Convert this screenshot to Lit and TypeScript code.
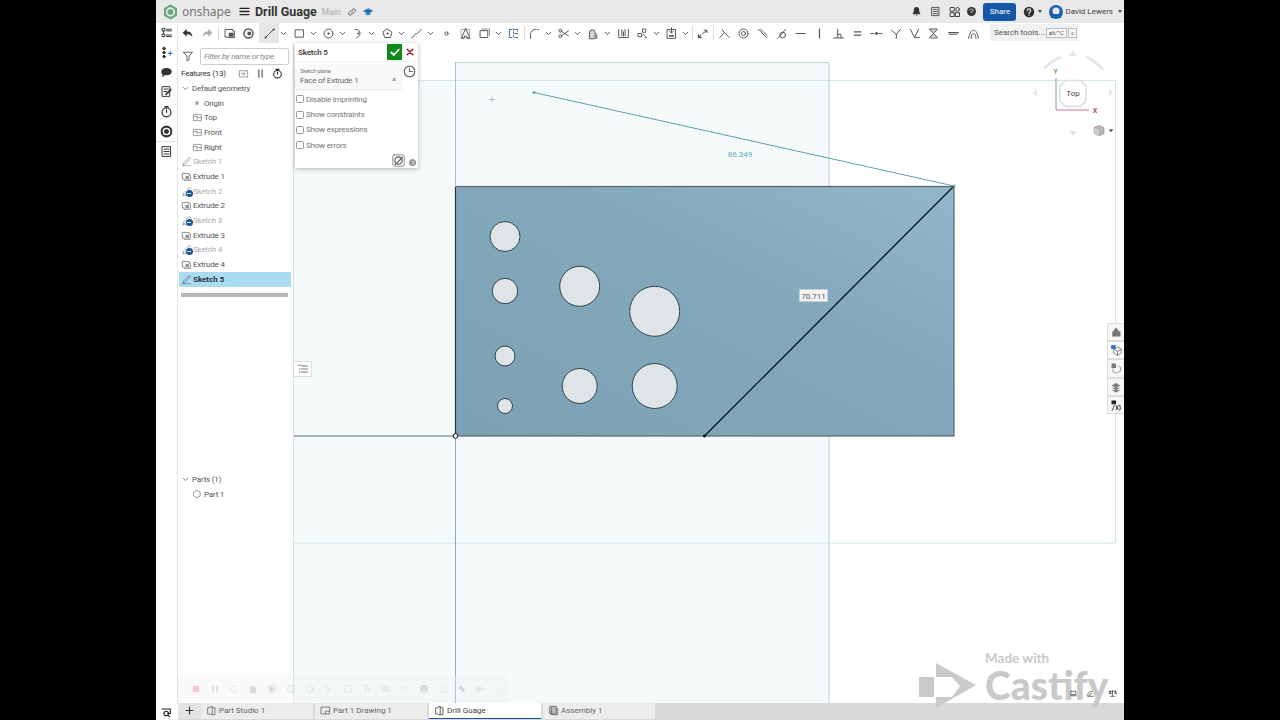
import { LitElement, html, svg, css } from 'lit';
import { customElement } from 'lit/decorators.js';

const S = (body: unknown, size = 14, box = '0 0 16 16') =>
  html`<svg width=${size} height=${size} viewBox=${box} fill="none" stroke="currentColor" stroke-width="1.2" stroke-linecap="round" stroke-linejoin="round">${body}</svg>`;

// sketch toolbar glyphs, all in a 16x16 box
const G: Record<string, unknown> = {
  undo: svg`<path d="M2 7l5-4.500v3c4.500 0 7 2.500 7 7-2-3-3.500-3.500-7-3.500v3z" fill="#333" stroke="none"/>`,
  redo: svg`<path d="M14 7L9 2.500v3c-4.500 0-7 2.500-7 7 2-3 3.500-3.500 7-3.500v3z" fill="#aaa" stroke="none"/>`,
  studio: svg`<path d="M3 3h9v2h2v8H5v-1H3z"/><rect x="7" y="7" width="6" height="5" fill="currentColor" stroke="none"/>`,
  rings: svg`<circle cx="8" cy="8" r="5.500" stroke-width="1.800"/><circle cx="9" cy="8" r="2.500" fill="currentColor" stroke="none"/>`,
  line: svg`<path d="M3 13L13 3"/><circle cx="3" cy="13" r=".8"/><circle cx="13" cy="3" r=".8"/>`,
  rect: svg`<rect x="3" y="3.500" width="10" height="9"/>`,
  circle: svg`<circle cx="8" cy="8" r="5.500"/><circle cx="8" cy="8" r=".8" fill="currentColor"/>`,
  arc: svg`<path d="M5 3a5 5 0 0 1 2 10" stroke-dasharray="2 1"/><circle cx="9" cy="8" r=".8" fill="currentColor"/>`,
  poly: svg`<path d="M8 2.500l5.500 4-2 6.500h-7l-2-6.500z"/><circle cx="8" cy="8" r=".8" fill="currentColor"/>`,
  spline: svg`<path d="M2 13c3 0 3-5 6-5s3-4 6-5" stroke-dasharray="3 1"/>`,
  point: svg`<circle cx="8" cy="8" r="2"/>`,
  text: svg`<path d="M8 2l-5 12h3l1-3h2l1 3h3z"/><path d="M3 3h10v10H3z" stroke-width=".6"/>`,
  conrect: svg`<rect x="3" y="4.500" width="9" height="8.500"/><path d="M5 2.500h9v8" stroke-width=".8"/>`,
  mirror: svg`<path d="M8 2v12" stroke-dasharray="2 2" stroke="#2d6fb5"/><path d="M6 3H3v10h3" stroke="#2d6fb5"/><path d="M10 3h3v2M10 8h3M10 13h3"/>`,
  fillet: svg`<path d="M3 14V9c0-3 3-6 6-6h1"/><path d="M12 3h2" stroke-dasharray="1 1"/>`,
  scissors: svg`<circle cx="4" cy="4.500" r="1.800"/><circle cx="4" cy="11.500" r="1.800"/><path d="M5.500 5.500L14 11M5.500 10.500L14 5"/>`,
  offset: svg`<path d="M3 14V7a3.500 3.500 0 0 1 7 0v7z" fill="currentColor" fill-opacity=".25"/><path d="M12 14V9" />`,
  ruler: svg`<path d="M2 3v10h12V3M6 3v8M10 3v8M8 6v5"/>`,
  pattern: svg`<rect x="8" y="2.500" width="4" height="4" stroke-dasharray="1 1"/><rect x="3" y="8" width="4" height="4"/><path d="M9 9l4 4-2 0" stroke-dasharray="1 1"/>`,
  clip: svg`<rect x="3" y="3" width="10" height="11"/><path d="M8 1v6M5.500 5L8 7.500 10.500 5" /><rect x="5" y="10" width="6" height="2" fill="currentColor" stroke="none"/>`,
  arrow: svg`<path d="M3 13l3-3M3 9.500V13h3.500" stroke-width="1.500"/><path d="M8 8l5-3M10 4h3.500v3" stroke-width="1.200"/>`,
  coin: svg`<path d="M2 13L8 7l6 6M8 7L5 3"/>`,
  conc: svg`<circle cx="8" cy="8" r="5.500"/><circle cx="8" cy="8" r="2.500"/>`,
  para: svg`<path d="M3 3l10 10M5.500 2.500l8 8"/>`,
  tang: svg`<circle cx="9.500" cy="10" r="3.500"/><path d="M3 14L13 3"/>`,
  horiz: svg`<path d="M2.500 8h11" stroke-width="1.500"/>`,
  vert: svg`<path d="M8 2.500v11" stroke-width="1.500"/>`,
  perp: svg`<path d="M2 13.500h12M7 3v10M7 9h4v4"/>`,
  eq: svg`<path d="M4 6h8M4 10h8" stroke-width="1.500"/>`,
  mid: svg`<path d="M1 8h4M11 8h4" stroke-dasharray="1.500 1"/><circle cx="8" cy="8" r="1.400" fill="currentColor"/>`,
  normal: svg`<path d="M3 4l6 5 5-6M9 9v5"/>`,
  pierce: svg`<path d="M3 3l5 10 5-10M8 13h6"/>`,
  sym: svg`<path d="M3 2.500h10L8 8l5 5.500H3L8 8z"/><path d="M5 5h6M5 11h6" stroke-width=".6"/>`,
  dim: svg`<path d="M2 7h12" stroke-width="1.500"/><path d="M3 9h10" stroke-dasharray="1 1"/>`,
  curve: svg`<path d="M2 14c1-6 3-10 6-10s5 4 6 10"/><path d="M5 14c0-3 1-6 3-6s3 3 3 6"/>`,
};

// [centre x on the page, glyph]
const TOOLS: [number, string][] = [
  [187, 'undo'], [207, 'redo'], [229, 'studio'], [248, 'rings'], [269, 'line'], [283, 'v'], [299, 'rect'], [313, 'v'],
  [328, 'circle'], [342, 'v'], [357, 'arc'], [371, 'v'], [387, 'poly'], [401, 'v'], [416, 'spline'], [430, 'v'],
  [446, 'point'], [465, 'text'], [484, 'conrect'], [498, 'v'], [513, 'mirror'], [534, 'fillet'], [548, 'v'],
  [563, 'scissors'], [577, 'v'], [593, 'offset'], [607, 'v'], [623, 'ruler'], [642, 'pattern'], [656, 'v'],
  [671, 'clip'], [685, 'v'], [702, 'arrow'], [724, 'coin'], [743, 'conc'], [762, 'para'], [781, 'tang'], [800, 'horiz'],
  [819, 'vert'], [838, 'perp'], [857, 'eq'], [876, 'mid'], [895, 'normal'], [914, 'pierce'], [933, 'sym'], [953, 'dim'], [973, 'curve'],
];
const SEPS = [218, 524, 692, 713];

const chev = svg`<path d="M4 6l4 4 4-4" stroke-width="1.600"/>`;
const pageIcon = svg`<path d="M2.500 3.500h9v2h2v8h-9v-2h-2z"/><rect x="6.500" y="7" width="5" height="5" fill="currentColor" stroke="none" opacity=".8"/>`;
const planeIcon = svg`<path d="M2.500 3.500h11v9h-11z" stroke-width="1"/><path d="M2.500 6.500h5v4" stroke-width="1"/><path d="M8 8h5.500" stroke-width="1"/>`;
const pencil = svg`<path d="M2 14h12" stroke-width=".7"/><path d="M3 13l1-3 8-8 2 2-8 8z" stroke-width=".9"/>`;

const FEATURES = [
  { n: 'Sketch 1', t: 'sk', off: true }, { n: 'Extrude 1', t: 'ex' }, { n: 'Sketch 2', t: 'sk', off: true, hid: true },
  { n: 'Extrude 2', t: 'ex' }, { n: 'Sketch 3', t: 'sk', off: true, hid: true }, { n: 'Extrude 3', t: 'ex' },
  { n: 'Sketch 4', t: 'sk', off: true, hid: true }, { n: 'Extrude 4', t: 'ex' },
];
const HOLES = [
  [505, 236.5, 15], [505, 291, 12.7], [579.7, 286.3, 20], [654.7, 311.3, 25],
  [505, 356, 10], [579.7, 386, 17.5], [654.7, 386, 22.5], [505, 406, 7.5],
];
const TABS = [
  { n: 'Part Studio 1', i: 'ps' }, { n: 'Part 1 Drawing 1', i: 'dr' },
  { n: 'Drill Guage', i: 'ps', on: true }, { n: 'Assembly 1', i: 'as' },
];
// faint capture bar left over the recording, [colour, glyph]
const REC: [string, unknown][] = [
  ['#eee', svg`<path d="M4 3h8v10H4z"/>`],
  ['#f3c9cf', svg`<rect x="3" y="3" width="10" height="10" fill="currentColor" stroke="none"/>`],
  ['#ddd', svg`<path d="M5 3v10M11 3v10" stroke-width="2.400"/>`],
  ['#ddd', svg`<path d="M13 8a5 5 0 1 1-2-4"/>`],
  ['#d8d8d8', svg`<path d="M4 5h8v9H4zM3 3.500h10" fill="currentColor"/>`],
  ['#d4d4d4', svg`<circle cx="8" cy="8" r="8" fill="#eee" stroke="none"/><path d="M5 4l6 5-3 .5-1 3z" fill="currentColor"/>`],
  ['#d6dcdc', svg`<circle cx="8" cy="8" r="5.500" stroke-width="1.500"/><path d="M8 8l5 5"/>`],
  ['#dbe3e3', svg`<circle cx="8" cy="8" r="5.500" stroke-width="1.500"/><path d="M9 9l4 4"/>`],
  ['#e0e8e8', svg`<path d="M5 5l6 5-3 .5-1 3zM3 2v2M2 3h2"/>`],
  ['#e0e8e8', svg`<path d="M3 3h10v10H3z" stroke-dasharray="2 1"/>`],
  ['#dbe3e3', svg`<path d="M2 3h7M5.500 3v10M9 7h5M11.500 7v6"/>`],
  ['#e0e8e8', svg`<path d="M3 3v10M6.500 3v10M10 3v10M13 3v10M2 6h12M2 10h12" stroke-dasharray="1 1"/>`],
  ['#dbe3e3', svg`<path d="M3 13L13 3M3 6l3-3M10 13l3-3" stroke-width="1.600"/>`],
  ['#d0d8d8', svg`<circle cx="8" cy="8" r="6.500" fill="currentColor" stroke="none"/><path d="M5 10.500c2 1.500 4 1.500 6 0M5.500 6h1M9.500 6h1" stroke="#fff"/>`],
  ['#dbe3e3', svg`<path d="M2 10l6-6 6 6-3 3H5z"/>`],
  ['#d0d8d8', svg`<path d="M4 4l8 8M6 3l6 6-2 4-6-6z" fill="currentColor"/>`],
  ['#e0e8e8', svg`<rect x="2" y="4" width="8" height="8" fill="currentColor" stroke="none"/><path d="M10 7l4-2v6l-4-2z" fill="currentColor" stroke="none"/>`],
  ['#e0e8e8', svg`<path d="M10 3L5 8l5 5"/>`],
];

@customElement('app-root')
export class AppRoot extends LitElement {
  static styles = css`
    :host { display: block; width: 1280px; height: 720px; background: #000; font-family: Roboto, "Noto Sans", sans-serif; overflow: hidden; }
    .app { width: 968px; height: 720px; margin-left: 156px; background: #fff; display: flex; flex-direction: column; position: relative; overflow: hidden; }

    .top { height: 23px; background: #e9e9e9; display: flex; align-items: center; flex: none; color: #333; }
    .logo { margin-left: 7px; display: flex; }
    .brand { font-size: 12px; font-family: "Noto Sans", sans-serif; color: #777; margin-left: 4px; width: 53px; }
    .burger { margin-left: 4px; display: flex; color: #222; }
    .doc { font-size: 12.500px; font-weight: 700; color: #333; margin-left: 5px; }
    .branch { font-size: 8.500px; color: #aaa; margin-left: 5px; }
    .top-r { margin-left: auto; display: flex; align-items: center; }
    .share { width: 33px; height: 18px; background: #1657a8; border-radius: 3px; color: #fff; font-size: 8px; display: flex; align-items: center; justify-content: center; margin: 0 4px 0 4px; }
    .user { font-size: 8px; color: #444; margin-left: 2px; white-space: nowrap; }
    .caret { width: 0; height: 0; border: 2.500px solid transparent; border-top: 3px solid #444; border-bottom: none; }

    .tools { height: 20px; flex: none; background: #fff; position: relative; display: flex; align-items: center; color: #555; }
    .tool { width: 14px; height: 14px; display: flex; align-items: center; justify-content: center; flex: none; color: #555; }
    .tool.v { color: #444; }
    .tool.on { background: #e6e6e6; box-shadow: 0 0 0 3px #e6e6e6; }
    .sep { position: absolute; top: 3px; width: 1px; height: 15px; background: #ddd; }
    .search { position: absolute; left: 834px; top: 1px; width: 88px; height: 17px; background: #f1f1f1; font-size: 8px; color: #555; display: flex; align-items: center; padding-left: 4px; box-sizing: border-box; gap: 1px; white-space: nowrap; }
    .key { border: 1px solid #bbb; font-size: 5.500px; background: #f8f8f8; padding: 0 2px; line-height: 8px; color: #444; }

    .main { flex: 1; display: flex; min-height: 0; position: relative; }
    .rail { width: 22px; flex: none; border-right: 1px solid #e5e5e5; box-sizing: border-box; display: flex; flex-direction: column; align-items: center; color: #333; margin-top: -20px; background: #fff; z-index: 1; }
    .rail i { display: flex; height: 19.700px; align-items: center; }
    .rail hr { width: 22px; border: 0; border-top: 1px solid #ddd; margin: 0; height: 0; }
    .panel { width: 116px; flex: none; border-right: 1px solid #ddd; box-sizing: border-box; display: flex; flex-direction: column; font-size: 8px; letter-spacing: -.2px; color: #444; }
    .filter { display: flex; align-items: center; height: 22px; box-sizing: border-box; padding: 4px 0 0 4px; gap: 6px; color: #555; }
    .filter div { width: 89px; height: 17px; border: 1px solid #ccc; border-radius: 2px; box-sizing: border-box; font-style: italic; color: #888; display: flex; align-items: center; padding-left: 3px; font-size: 8px; }
    .head { display: flex; align-items: center; height: 16px; padding: 0 7px 0 3px; color: #333; }
    .head b { font-weight: 400; flex: 1; }
    .head span { display: flex; width: 17px; justify-content: center; color: #888; }
    .row { height: 14.700px; display: flex; align-items: center; white-space: nowrap; color: #555; }
    .row .ic { width: 14px; display: flex; justify-content: center; position: relative; color: #777; flex: none; }
    .row.off { color: #aaa; }
    .row.sel { background: #a9dcf2; color: #223; font-weight: 600; margin: 0 2px 0 1px; letter-spacing: 0; }
    .row.sel .ic { color: #556; }
    .hid { position: absolute; left: 6.500px; top: 4px; width: 7px; height: 7px; border-radius: 50%; background: #14559e; }
    .hid::after { content: ""; position: absolute; left: 1.500px; top: 3px; width: 4px; height: 1px; background: #fff; }
    .rollback { height: 4px; background: #b8b8b8; margin: 6px 5px 0 3px; }
    .parts { margin-top: auto; height: 231px; flex: none; }
    .dot { width: 4px; height: 4px; border-radius: 50%; background: #aaa; }

    .canvas { flex: 1; position: relative; min-width: 0; }
    .canvas > svg { display: block; }
    .dlg { position: absolute; left: 1px; top: 0; width: 123px; height: 125px; background: #fff; box-shadow: 0 1px 5px rgba(0,0,0,.28); font-size: 8px; letter-spacing: -.2px; color: #777; box-sizing: border-box; display: flex; flex-direction: column; }
    .dlg-h { display: flex; align-items: center; height: 18px; padding-left: 3px; border-bottom: 1px solid #eee; flex: none; color: #444; font-weight: 600; }
    .ok { margin-left: auto; width: 15px; height: 16px; background: #0d8a17; color: #fff; display: flex; align-items: center; justify-content: center; }
    .no { width: 16px; display: flex; justify-content: center; color: #9c2222; }
    .plane-w { display: flex; margin: 3px 0 0 1px; }
    .plane { width: 105px; height: 24px; background: #f8fafa; box-shadow: 0 1px 2px rgba(0,0,0,.12); box-sizing: border-box; padding: 2px 4px; position: relative; }
    .plane small { display: block; font-size: 5.800px; line-height: 8px; color: #777; }
    .plane span { display: block; line-height: 12px; color: #666; font-size: 8px; }
    .plane em { position: absolute; right: 5px; top: 10px; font-style: normal; font-size: 8px; }
    .clock { margin-left: 2px; color: #666; display: flex; }
    .chk { display: flex; align-items: center; gap: 2px; height: 15.400px; padding-left: 1px; }
    .chk i { width: 6px; height: 6px; border: 1px solid #999; border-radius: 1.500px; flex: none; }
    .chks { margin-top: 2.500px; }
    .dlg-f { margin-top: auto; display: flex; justify-content: flex-end; align-items: center; height: 18px; padding-right: 2px; gap: 4px; color: #555; }
    .help { width: 7px; height: 7px; border-radius: 50%; background: #999; color: #fff; font-size: 6px; line-height: 7px; text-align: center; margin-top: 3px; }
    .list-btn { position: absolute; left: 0; top: 318px; width: 18px; height: 16px; background: #fff; border: 1px solid #ddd; border-left: 0; box-sizing: border-box; color: #666; display: flex; align-items: center; justify-content: center; }
    .views { position: absolute; right: 0; top: 280px; width: 17px; display: flex; flex-direction: column; }
    .views span { height: 18.200px; background: #f6f6f6; border: 1px solid #ddd; border-right: 0; box-sizing: border-box; display: flex; align-items: center; justify-content: center; color: #777; }
    .views span.hi { color: #456; background: #fafafa; }
    .mark { position: absolute; left: 625px; top: 608px; color: #c9c9c9; font-family: Lato, "Noto Sans", sans-serif; font-weight: 700; display: flex; }
    .mark-t { display: flex; flex-direction: column; align-items: flex-start; margin-left: 8px; }
    .mark-t small { font-size: 13.500px; line-height: 14px; }
    .mark-t b { font-size: 39px; line-height: 40px; font-weight: 900; }
    .rec { position: absolute; left: 16px; top: 632px; width: 336px; height: 27px; background: rgba(240,240,240,.35); display: flex; align-items: center; box-sizing: border-box; }
    .rec span { width: 18.950px; display: flex; justify-content: center; flex: none; }
    .rec span:first-child { margin-left: -4px; }
    .marks { position: absolute; left: 775px; top: 646px; display: flex; color: #333; gap: 8px; }

    .tabs { height: 17px; flex: none; background: #d9d9d9; display: flex; align-items: flex-start; font-size: 8px; color: #555; }
    .t-ic { width: 22px; height: 17px; background: #fff; display: flex; align-items: center; justify-content: center; color: #222; flex: none; }
    .t-add { width: 23px; height: 15.500px; background: #e3e3e3; display: flex; align-items: center; justify-content: center; color: #333; flex: none; }
    .tab { width: 112px; height: 15.500px; margin-right: 2px; background: #ececec; display: flex; align-items: center; padding-left: 5px; gap: 2px; box-sizing: border-box; flex: none; color: #666; }
    .tab.on { background: #fff; border-bottom: 1.500px solid #1657a8; color: #444; }
  `;

  private toolbar() {
    return TOOLS.map(([x, g], i) => {
      const left = i ? x - TOOLS[i - 1][0] - 14 : x - 156 - 7;
      return html`<span class="tool ${g === 'v' ? 'v' : ''} ${g === 'line' ? 'on' : ''}" style="margin-left:${left}px">
        ${g === 'v' ? S(chev, 9) : S(G[g], 13)}
      </span>`;
    });
  }

  private tree() {
    const row = (pad: number, icon: unknown, n: string, cls = '', hid = false) => html`
      <div class="row ${cls}" style="padding-left:${pad}px">
        <span class="ic">${icon}${hid ? html`<i class="hid"></i>` : ''}</span>${n}
      </div>`;
    return html`
      ${row(0, S(chev, 9), 'Default geometry')}
      ${row(12, html`<i class="dot"></i>`, 'Origin')}
      ${row(12, S(planeIcon, 11), 'Top')}
      ${row(12, S(planeIcon, 11), 'Front')}
      ${row(12, S(planeIcon, 11), 'Right')}
      ${FEATURES.map((f) => row(1, S(f.t === 'sk' ? pencil : pageIcon, 11), f.n, f.off ? 'off' : '', !!f.hid))}
      ${row(0, S(pencil, 11), 'Sketch 5', 'sel')}
      <div class="rollback"></div>`;
  }

  private drawing() {
    return svg`
      <defs>
        <linearGradient id="face" x1="0" y1="1" x2="1" y2="0">
          <stop offset="0" stop-color="#7da0b4"/><stop offset=".6" stop-color="#83a8bc"/><stop offset="1" stop-color="#93b7ca"/>
        </linearGradient>
      </defs>
      <rect x="294" y="43" width="830" height="660" fill="#fff"/>
      <rect x="294" y="80" width="535" height="623" fill="#f5fafb"/>
      <rect x="456" y="62" width="373" height="18" fill="#f5fafb"/>
      <path d="M294 80.500H1115.500V543H294" stroke="#d2e5e8" fill="none"/>
      <path d="M456 62.500H829V703" stroke="#b9d2d8" fill="none"/>
      <path d="M534 92.500L954 186" stroke="#5f9fae" fill="none"/>
      <circle cx="534" cy="92.500" r="1.500" fill="#5f9fae"/>
      <path d="M489 99.500h6M492 96.500v6" stroke="#aac" stroke-width=".8"/>
      <text x="740" y="157" text-anchor="middle" font-size="8" fill="#62a7b8">86.349</text>
      <rect x="455.500" y="186.500" width="498.500" height="249.500" fill="url(#face)" stroke="#5a6468" stroke-width="1.200"/>
      ${HOLES.map(([x, y, r]) => svg`<circle cx=${x} cy=${y} r=${r} fill="#dfe4e7" stroke="#2f4550" stroke-width="1"/>`)}
      <path d="M455.500 62V187" stroke="#a9c0d0" fill="none"/>
      <path d="M455.500 436V703" stroke="#8aa9c6" fill="none"/>
      <path d="M294 436H455.500" stroke="#8a9ba6" stroke-width="1.400" fill="none"/>
      <path d="M455.500 187V436" stroke="#23323a" fill="none"/>
      <path d="M704.500 436L954 186" stroke="#0c1a20" stroke-width="1.400" fill="none"/>
      <circle cx="704.500" cy="436" r="1.500" fill="#111"/>
      <circle cx="455.500" cy="436" r="2.300" fill="#fff" stroke="#111"/>
      <circle cx="954" cy="186" r="1.500" fill="#5f9fae"/>
      <rect x="799.500" y="289.500" width="28" height="12" fill="#f4f6f7" stroke="#c7ced2"/>
      <text x="813.500" y="298.500" text-anchor="middle" font-size="8" fill="#555">70.711</text>

      <g fill="none" stroke="#e6e6e6" stroke-width="2.500">
        <path d="M1044 69c3-4 8-8 17-12M1086 57c7 3 13 8 17 12"/>
      </g>
      <path d="M1073 51l4 5h-8zM1073 136l4-5h-8zM1033 93l4-4v8zM1113 93l-4-4v8z" fill="#e5e5e5"/>
      <path d="M1056 78V110" stroke="#6fae7a"/>
      <path d="M1056 110H1089" stroke="#c77b86"/>
      <path d="M1065.500 80.500h15l5.500 5.500v15l-5.500 5.500h-15l-5.500-5.500v-15z" fill="#fff" stroke="#dcdfe0" stroke-width="1.600"/>
      <text x="1073" y="96" text-anchor="middle" font-size="8" fill="#444">Top</text>
      <text x="1055.500" y="74" text-anchor="middle" font-size="6.500" font-weight="700" fill="#5fa86b">Y</text>
      <text x="1095" y="113" text-anchor="middle" font-size="6.500" font-weight="700" fill="#b5475a">X</text>
      <path d="M1094 127.500l5-2 5 2v6l-5 2.500-5-2.500z" fill="#b5b5b5" stroke="#888" stroke-width=".6"/>
      <path d="M1099 130v6l-5-2.500v-6z" fill="#ccc"/>
      <path d="M1108.500 129.500h5l-2.500 2.500z" fill="#444"/>`;
  }

  render() {
    const onshapeLogo = html`<svg width="15" height="16" viewBox="0 0 15 16">
      <path d="M7.500.5l6.500 3.700v7.600l-6.500 3.700L1 11.800V4.200z" fill="#6aa57c"/>
      <circle cx="7.500" cy="8" r="3.800" fill="none" stroke="#e9e9e9" stroke-width="1.700"/></svg>`;
    return html`
      <div class="app">
        <div class="top">
          <span class="logo">${onshapeLogo}</span>
          <span class="brand">onshape</span>
          <span class="burger">${S(svg`<path d="M1.500 3.500h13M1.500 8h13M1.500 12.500h13" stroke-width="2"/>`, 11)}</span>
          <span class="doc">Drill Guage</span>
          <span class="branch">Main</span>
          <span style="margin-left:6px;display:flex">${S(svg`<path d="M7 9.500a2.500 2.500 0 0 0 3.500 0L13 7a2.500 2.500 0 0 0-3.500-3.500L8.500 4.500M9 6.500a2.500 2.500 0 0 0-3.500 0L3 9a2.500 2.500 0 0 0 3.500 3.500l1-1"/>`, 10)}</span>
          <span style="margin-left:6px;display:flex;color:#1f67b5">${S(svg`<path d="M8 3L1 6.500 8 10l7-3.500z" fill="currentColor"/><path d="M4 9v3c2 1.500 6 1.500 8 0V9" fill="#3e8dc4" stroke="none"/>`, 10)}</span>
          <div class="top-r">
            <span style="display:flex;margin-right:8px">${S(svg`<path d="M8 1.500c-3 0-4 2.500-4 5 0 3-1.500 4.500-2 5.500h12c-.5-1-2-2.500-2-5.500 0-2.500-1-5-4-5zM6.500 13.500h3L8 15z" fill="currentColor" stroke="none"/>`, 11)}</span>
            <span style="display:flex;margin-right:8px">${S(svg`<rect x="3" y="2" width="10" height="12"/><path d="M5 5h6M5 8h6M5 11h6" stroke-dasharray="1.500 1"/>`, 11)}</span>
            <span style="display:flex;margin-right:5px">${S(svg`<rect x="2" y="2" width="5" height="5"/><rect x="2" y="9" width="5" height="5"/><rect x="9" y="9" width="5" height="5"/><circle cx="11.500" cy="4.500" r="2.500"/>`, 12)}</span>
            <span style="display:flex;margin-right:2px">${S(svg`<circle cx="8" cy="8" r="6.500" fill="currentColor" stroke="none"/><path d="M5 6c2-2 4-2 6 0-1 2-2 1-2 3H7" stroke="#e9e9e9"/>`, 11)}</span>
            <span class="share">Share</span>
            <span style="display:flex;margin:0 3px 0 3px">${S(svg`<circle cx="8" cy="8" r="7" fill="currentColor" stroke="none"/><path d="M5.800 6a2.200 2.200 0 1 1 3 2.200C8 8.700 8 9 8 10M8 12v.3" stroke="#e9e9e9" stroke-width="1.600"/>`, 12)}</span>
            <i class="caret"></i>
            <span style="display:flex;margin-left:7px">
              <svg width="14" height="14" viewBox="0 0 14 14"><circle cx="7" cy="7" r="7" fill="#1f5fae"/><circle cx="7" cy="6" r="3.500" fill="#e9e9e9"/><path d="M1.500 13c1-3 3-4 5.500-4s4.500 1 5.500 4z" fill="#1f5fae"/></svg>
            </span>
            <span class="user">David Lewers</span>
            <i class="caret" style="margin:0 2px 0 5px"></i>
          </div>
        </div>

        <div class="tools">
          ${this.toolbar()}
          ${SEPS.map((x) => html`<i class="sep" style="left:${x - 156}px"></i>`)}
          <div class="search">Search tools... <span class="key">alt/⌥</span><span class="key">c</span></div>
        </div>

        <div class="main">
          <div class="rail">
            <i>${S(svg`<path d="M3 3h3v3H3zM3 10h3v3H3zM8 4h6M8 6h6M8 11h6M8 13h6M4.500 6v4"/>`, 13)}</i>
            <i>${S(svg`<circle cx="5" cy="3" r="1.500" fill="currentColor"/><circle cx="5" cy="8" r="1.500" fill="currentColor"/><circle cx="5" cy="13" r="1.500" fill="currentColor"/><path d="M10 9h5M12.500 6.500v5" stroke="#1f67b5"/>`, 13)}</i>
            <i>${S(svg`<path d="M8 2.500c4 0 6.500 2 6.500 4.500S12 11.500 8 11.500c-1 0-2 0-2.500-.2L3 14v-3.500C2 9.500 1.500 8.300 1.500 7 1.500 4.500 4 2.500 8 2.500z" fill="currentColor" stroke="none"/>`, 13)}</i>
            <i>${S(svg`<path d="M3 2h9v12H3zM5 5h5M5 8h3"/><path d="M7 11l6-6 1 1-6 6z" fill="currentColor"/>`, 13)}</i>
            <i>${S(svg`<circle cx="8" cy="9" r="5.500" stroke-width="1.500"/><path d="M6 2h4M8 9V6" stroke-width="1.500"/>`, 13)}</i>
            <i>${S(svg`<circle cx="8" cy="8" r="6" stroke-width="2.500"/><circle cx="8" cy="8" r="2.500" fill="currentColor"/>`, 13)}</i>
            <hr />
            <i>${S(svg`<rect x="3" y="2" width="10" height="12"/><path d="M5 5h6M5 8h6M5 11h6"/>`, 13)}</i>
          </div>
          <div class="panel">
            <div class="filter">${S(svg`<path d="M2 3h12L9.500 8v5l-3 1.500V8z"/>`, 12)}<div>Filter by name or type</div></div>
            <div class="head">
              <b>Features (13)</b>
              <span>${S(svg`<rect x="2" y="4" width="12" height="9" stroke-dasharray="2 1"/><path d="M5 8.500h5M8 6.500l2 2-2 2"/>`, 11)}</span>
              <span>${S(svg`<path d="M5.500 3v10M10.500 3v10" stroke-width="2.400"/>`, 11)}</span>
              <span style="color:#222">${S(svg`<circle cx="8" cy="9" r="5.500" stroke-width="1.500"/><path d="M6 2h4M8 9V6" stroke-width="1.500"/>`, 11)}</span>
            </div>
            ${this.tree()}
            <div class="parts">
              <div class="row"><span class="ic">${S(chev, 9)}</span>Parts (1)</div>
              <div class="row" style="padding-left:12px"><span class="ic">${S(svg`<path d="M3 5l5-3 5 3v6l-5 3-5-3z"/>`, 10)}</span>Part 1</div>
            </div>
          </div>
          <div class="canvas">
            <svg width="830" height="660" viewBox="294 43 830 660" font-family="Roboto, sans-serif">${this.drawing()}</svg>
            <div class="dlg">
              <div class="dlg-h">Sketch 5
                <span class="ok">${S(svg`<path d="M3 8.500l3.500 3.500L13 5" stroke-width="2.400"/>`, 12)}</span>
                <span class="no">${S(svg`<path d="M3.500 3.500l9 9M12.500 3.500l-9 9" stroke-width="2.400"/>`, 10)}</span>
              </div>
              <div class="plane-w">
                <div class="plane"><small>Sketch plane</small><span>Face of Extrude 1</span><em>×</em></div>
                <span class="clock">${S(svg`<circle cx="8" cy="8" r="6.500" stroke-width="1.500"/><path d="M8 4v4h4" stroke-width="1.300"/>`, 13)}</span>
              </div>
              <div class="chks">
                ${['Disable imprinting', 'Show constraints', 'Show expressions', 'Show errors'].map((c) => html`<div class="chk"><i></i>${c}</div>`)}
              </div>
              <div class="dlg-f">
                ${S(svg`<rect x="1" y="1" width="14" height="14" rx="2" stroke-width=".8"/><circle cx="8" cy="8" r="4.500" stroke-width="1.400"/><path d="M4 13L13 4" stroke-width="1.400"/>`, 13)}
                <span class="help">?</span>
              </div>
            </div>
            <div class="list-btn">${S(svg`<path d="M2 3l1 1 1.500-2M3 8h1M3 12h1M6 4h8M6 8h8M6 12h8"/>`, 12)}</div>
            <div class="views">
              <span>${S(svg`<path d="M8 2l4 5h2v7H3V8z" fill="currentColor" stroke="none"/>`, 12)}</span>
              <span class="hi">${S(svg`<rect x="1.500" y="1.500" width="6" height="5" fill="#2a73c0" stroke="none"/><path d="M5 7l5-3 5 3v5l-5 3-5-3zM5 7l5 3 5-3M10 10v5" stroke-width=".9"/>`, 12)}</span>
              <span>${S(svg`<rect x="2" y="2" width="6" height="6" fill="currentColor" stroke="none"/><path d="M4 9v4l4 2 6-3V7l-3-2" stroke-width=".9"/>`, 12)}</span>
              <span>${S(svg`<path d="M8 3l5 3-5 3-5-3zM3 9l5 3 5-3M3 12l5 3 5-3" fill="currentColor" stroke-width=".6"/>`, 12)}</span>
              <span style="color:#222">${S(svg`<rect x="2" y="2" width="6" height="5" fill="currentColor" stroke="none"/><path d="M3 15c2-2 1-5 3-7M13 8c1 3 1 5 0 7M8 9l3 5M11 9l-3 5" />`, 12)}</span>
            </div>
            <div class="mark">
              <svg width="58" height="46" viewBox="0 0 58 46" style="margin-top:12px"><path d="M0 14h15v20H0zM17 0l40 22-40 23V34h16l8-11-8-9H17z" fill="currentColor"/></svg>
              <div class="mark-t"><small>Made with</small><b>Castify</b></div>
            </div>
            <div class="marks">
              ${S(svg`<rect x="4" y="4" width="8" height="6"/><path d="M3 12h10"/>`, 9)}
              ${S(svg`<path d="M3 12a7 7 0 0 1 8-8M6 12a4 4 0 0 1 4-4M3 13h10"/>`, 9)}
              <span style="margin-left:5px;display:flex">${S(svg`<path d="M8 3v9M3 4h10M3 4l-1 4h3zM13 4l-1 4h3zM4 13h8"/>`, 9)}</span>
            </div>
          </div>
          <div class="rec">
            ${REC.map(([c, g]) => html`<span style="color:${c}">${S(g, 10)}</span>`)}
          </div>
        </div>

        <div class="tabs">
          <span class="t-ic">${S(svg`<path d="M1.500 4h11v6H9M7 7a3 3 0 1 0 0 6 3 3 0 0 0 0-6zM9.500 12.500l2 2" stroke-width="1.500"/>`, 12)}</span>
          <span class="t-add">${S(svg`<path d="M8 3v10M3 8h10" stroke-width="1.600"/>`, 11)}</span>
          ${TABS.map((t) => html`<div class="tab ${t.on ? 'on' : ''}">
            ${S(t.i === 'dr' ? svg`<rect x="2" y="3" width="12" height="10"/><path d="M8 13v-4h6" />` : t.i === 'as' ? svg`<rect x="3" y="2" width="9" height="11" fill="#bbb"/><path d="M5 4v10h9V5" />` : svg`<path d="M3 4h3l1-2h2v12H7l-1-1H3zM9 4h4v10H9" />`, 11)}
            ${t.n}
          </div>`)}
        </div>
      </div>
    `;
  }
}
